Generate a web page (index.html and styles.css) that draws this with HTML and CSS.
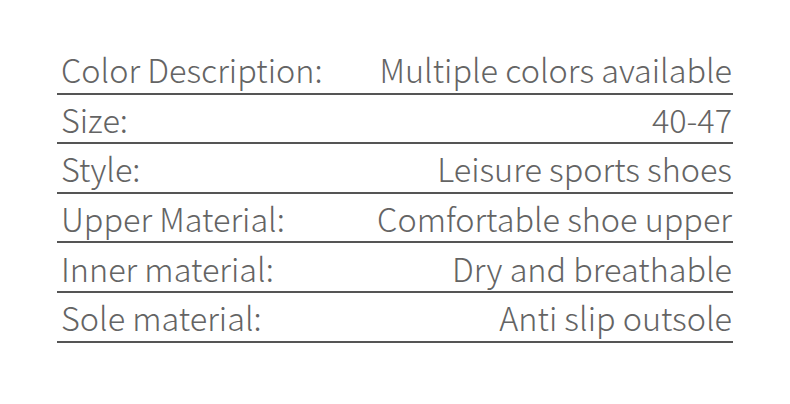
FILE: index.html
```html
<!DOCTYPE html>
<html>
<head>
<meta charset="utf-8">
<link rel="stylesheet" href="styles.css">
</head>
<body>
<div class="specs">
  <div class="row"><span class="label">Color Description:</span><span class="value">Multiple colors available</span></div>
  <div class="row"><span class="label">Size:</span><span class="value">40-47</span></div>
  <div class="row"><span class="label">Style:</span><span class="value">Leisure sports shoes</span></div>
  <div class="row"><span class="label">Upper Material:</span><span class="value">Comfortable shoe upper</span></div>
  <div class="row"><span class="label">Inner material:</span><span class="value">Dry and breathable</span></div>
  <div class="row"><span class="label">Sole material:</span><span class="value">Anti slip outsole</span></div>
</div>
</body>
</html>
```
FILE: styles.css
```css
html, body {
  margin: 0;
  padding: 0;
  background: #fff;
}
.specs {
  width: 676px;
  margin-left: 57px;
  padding-top: 45px;
  font-family: "Noto Sans CJK SC", "Open Sans", sans-serif;
  font-weight: 300;
  font-size: 32.4px;
  color: #646464;
}
.row {
  display: flex;
  justify-content: space-between;
  align-items: center;
  height: 47.6px;
  border-bottom: 2px solid #555;
  padding: 0 1px 0 4px;
}
```
